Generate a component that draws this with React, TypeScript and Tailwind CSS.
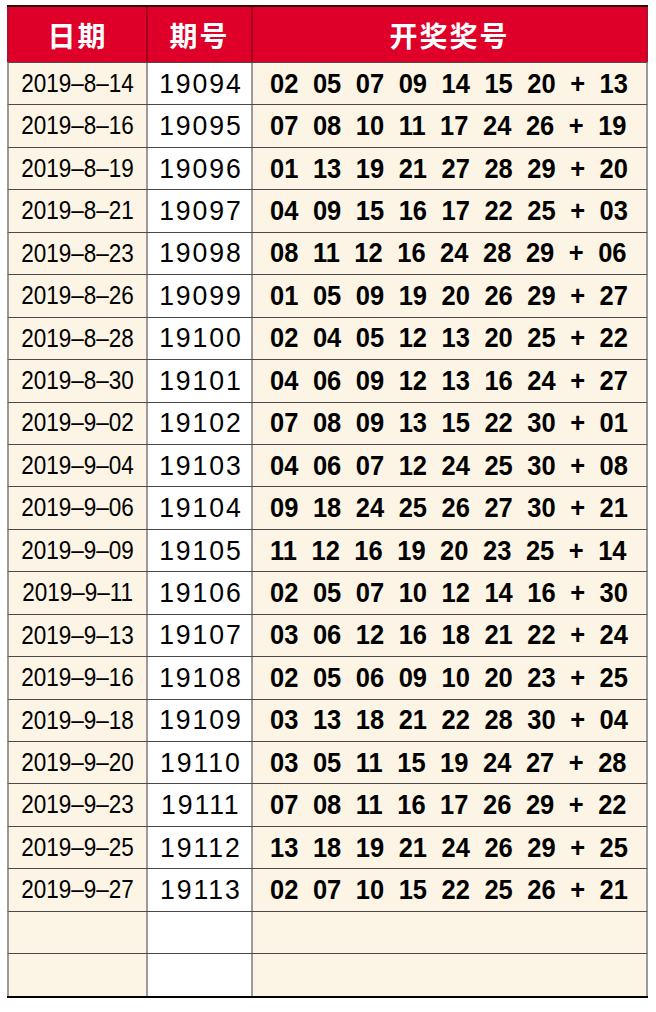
import React from "react";

const rows: [string, string, string][] = [
  ["2019–8–14", "19094", "02 05 07 09 14 15 20 + 13"],
  ["2019–8–16", "19095", "07 08 10 11 17 24 26 + 19"],
  ["2019–8–19", "19096", "01 13 19 21 27 28 29 + 20"],
  ["2019–8–21", "19097", "04 09 15 16 17 22 25 + 03"],
  ["2019–8–23", "19098", "08 11 12 16 24 28 29 + 06"],
  ["2019–8–26", "19099", "01 05 09 19 20 26 29 + 27"],
  ["2019–8–28", "19100", "02 04 05 12 13 20 25 + 22"],
  ["2019–8–30", "19101", "04 06 09 12 13 16 24 + 27"],
  ["2019–9–02", "19102", "07 08 09 13 15 22 30 + 01"],
  ["2019–9–04", "19103", "04 06 07 12 24 25 30 + 08"],
  ["2019–9–06", "19104", "09 18 24 25 26 27 30 + 21"],
  ["2019–9–09", "19105", "11 12 16 19 20 23 25 + 14"],
  ["2019–9–11", "19106", "02 05 07 10 12 14 16 + 30"],
  ["2019–9–13", "19107", "03 06 12 16 18 21 22 + 24"],
  ["2019–9–16", "19108", "02 05 06 09 10 20 23 + 25"],
  ["2019–9–18", "19109", "03 13 18 21 22 28 30 + 04"],
  ["2019–9–20", "19110", "03 05 11 15 19 24 27 + 28"],
  ["2019–9–23", "19111", "07 08 11 16 17 26 29 + 22"],
  ["2019–9–25", "19112", "13 18 19 21 24 26 29 + 25"],
  ["2019–9–27", "19113", "02 07 10 15 22 25 26 + 21"],
  ["", "", ""],
  ["", "", ""],
];

const sans = "font-['Liberation_Sans','Noto_Sans_CJK_SC',sans-serif]";

export default function App() {
  return (
    <div className="w-[656px] h-[1012px] bg-white pt-[5px] pl-[7px]">
      <div className={`w-[641px] border-t-2 border-b-2 border-t-[#2a0a0a] border-b-black ${sans}`}>
        <div className="flex h-[55px] bg-[#df0029] border-x-2 border-x-[#b01030] text-white font-bold text-[28px] font-['Noto_Sans_CJK_SC',sans-serif]">
          <div className="w-[139px] shrink-0 border-r-2 border-[#a0001e] flex items-center justify-center tracking-[2px]">日期</div>
          <div className="w-[105px] shrink-0 border-r-2 border-[#a0001e] flex items-center justify-center tracking-[2px]">期号</div>
          <div className="flex-1 min-w-0 flex items-center justify-center tracking-[2px]">开奖奖号</div>
        </div>
        {rows.map((r, i) => (
          <div
            key={i}
            className="flex h-[42.45px] border-t border-t-[#4a4a4a] border-x-2 border-x-[#9a9a9a] text-black"
          >
            <div className="w-[139px] shrink-0 bg-[#fcf4e4] border-r-2 border-[#9a9a9a] flex items-center justify-center text-[25px] whitespace-nowrap">
              <span className="inline-block scale-x-[0.9]">{r[0]}</span>
            </div>
            <div className="w-[105px] shrink-0 bg-white border-r-2 border-[#9a9a9a] flex items-center justify-center text-[28px] whitespace-nowrap">
              <span className="inline-block scale-x-[0.95] tracking-[2px] pl-[2px]">{r[1]}</span>
            </div>
            <div className="flex-1 min-w-0 overflow-hidden bg-[#fcf4e4] flex items-center pl-[17px] font-bold text-[28px] whitespace-nowrap">
              <span className="inline-block origin-left scale-x-[0.91] [word-spacing:8.2px]">{r[2]}</span>
            </div>
          </div>
        ))}
      </div>
    </div>
  );
}
